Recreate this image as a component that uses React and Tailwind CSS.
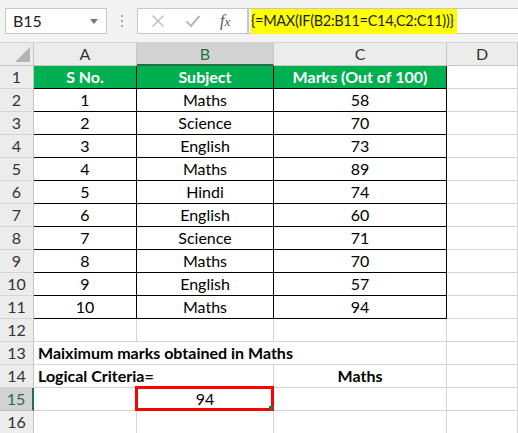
import React from 'react';

const font = { fontFamily: 'Lato, "Open Sans", sans-serif' };

const rows = [
  ['1', 'Maths', '58'],
  ['2', 'Science', '70'],
  ['3', 'English', '73'],
  ['4', 'Maths', '89'],
  ['5', 'Hindi', '74'],
  ['6', 'English', '60'],
  ['7', 'Science', '71'],
  ['8', 'Maths', '70'],
  ['9', 'English', '57'],
  ['10', 'Maths', '94'],
];

const RowHead = ({ n, active }) => (
  <div
    className={`h-[23px] flex items-center justify-center border-b border-r text-[16px] ${
      active
        ? 'bg-[#d2d2d2] border-b-[#bdbdbd] border-r-[#217346] border-r-2 text-[#217346]'
        : 'bg-[#ececec] border-b-[#d4d4d4] border-r-[#c6c6c6] text-[#333]'
    }`}
  >
    {n}
  </div>
);

const Cell = ({ children, black, blackRight, className = '' }) => (
  <div
    className={`h-[23px] flex items-center justify-center border-b border-r text-[16px] text-black ${
      black ? 'border-b-black' : 'border-b-[#d4d4d4]'
    } ${blackRight ? 'border-r-black' : 'border-r-[#d4d4d4]'} ${className}`}
  >
    {children}
  </div>
);

export default function App() {
  return (
    <div className="w-[518px] h-[433px] overflow-hidden bg-white" style={font}>
      {/* Formula bar */}
      <div className="h-[43px] bg-[#f3f3f3] flex items-start pt-[8px] border-b border-[#d4d4d4]">
        <div className="ml-[5px] w-[102px] h-[26px] bg-white border border-[#c6c6c6] flex items-center justify-between pl-[7px] pr-[8px]">
          <span className="text-[16px] text-[#222]">B15</span>
          <span className="w-0 h-0 border-l-[4px] border-r-[4px] border-t-[5px] border-l-transparent border-r-transparent border-t-[#777]" />
        </div>
        <div className="w-[30px] h-[26px] flex flex-col items-center justify-center gap-[3px]">
          <span className="w-[2px] h-[2px] bg-[#aaa]" />
          <span className="w-[2px] h-[2px] bg-[#aaa]" />
          <span className="w-[2px] h-[2px] bg-[#aaa]" />
        </div>
        <div className="w-[111px] h-[26px] bg-white border border-[#c6c6c6] flex items-center">
          <svg width="14" height="14" viewBox="0 0 14 14" className="ml-[13px]">
            <path d="M1.5 1.5 L12.5 12.5 M12.5 1.5 L1.5 12.5" stroke="#b8b8b8" strokeWidth="1.3" />
          </svg>
          <svg width="16" height="14" viewBox="0 0 16 14" className="ml-[20px]">
            <path d="M1.5 7.5 L6 12 L14.5 2" stroke="#b8b8b8" strokeWidth="2" fill="none" />
          </svg>
          <span className="ml-[19px] text-[16px] italic text-[#555]" style={{ fontFamily: '"Liberation Serif", serif' }}>
            f<span className="text-[13px]">x</span>
          </span>
        </div>
        <div className="flex-1 h-[26px] bg-white border-y border-l border-[#c6c6c6] flex items-center pl-[2px]">
          <span className="h-[25px] bg-[#ffff00] flex items-center pr-[3px] text-[14.5px] tracking-[-0.3px] text-[#222] whitespace-nowrap">
            {'{=MAX(IF(B2:B11=C14,C2:C11))}'}
          </span>
        </div>
      </div>

      {/* Grid */}
      <div className="grid grid-cols-[34px_103px_137px_173px_71px]">
        {/* Column headers */}
        <div className="h-[23px] bg-[#ececec] border-r border-b border-[#c6c6c6] relative">
          <svg width="15" height="15" className="absolute right-[3px] bottom-[3px]">
            <polygon points="15,0 15,15 0,15" fill="#b4b4b4" />
          </svg>
        </div>
        <div className="h-[23px] bg-[#ececec] border-r border-b border-[#c6c6c6] flex items-center justify-center text-[16px] text-[#333]">A</div>
        <div className="h-[23px] bg-[#d2d2d2] border-r border-[#c6c6c6] border-b-2 border-b-[#217346] flex items-center justify-center text-[16px] text-[#217346]">B</div>
        <div className="h-[23px] bg-[#ececec] border-r border-b border-[#c6c6c6] flex items-center justify-center text-[16px] text-[#333]">C</div>
        <div className="h-[23px] bg-[#ececec] border-r border-b border-[#c6c6c6] flex items-center justify-center text-[16px] text-[#333]">D</div>

        {/* Row 1 */}
        <RowHead n={1} />
        <Cell black blackRight className="bg-[#00b050] text-white font-bold">S No.</Cell>
        <Cell black blackRight className="bg-[#00b050] text-white font-bold">Subject</Cell>
        <Cell black blackRight className="bg-[#00b050] text-white font-bold">Marks (Out of 100)</Cell>
        <Cell />

        {rows.map((r, i) => (
          <React.Fragment key={i}>
            <RowHead n={i + 2} />
            <Cell black blackRight>{r[0]}</Cell>
            <Cell black blackRight>{r[1]}</Cell>
            <Cell black blackRight>{r[2]}</Cell>
            <Cell />
          </React.Fragment>
        ))}

        {/* Row 12 */}
        <RowHead n={12} />
        <Cell />
        <Cell />
        <Cell />
        <Cell />

        {/* Row 13 */}
        <RowHead n={13} />
        <Cell className="col-span-3 !justify-start pl-[4px] font-bold whitespace-nowrap">
          Maiximum marks obtained in Maths
        </Cell>
        <Cell />

        {/* Row 14 */}
        <RowHead n={14} />
        <Cell className="col-span-2 !justify-start pl-[4px] font-bold whitespace-nowrap">Logical Criteria=</Cell>
        <Cell className="font-bold">Maths</Cell>
        <Cell />

        {/* Row 15 */}
        <RowHead n={15} active />
        <Cell />
        <Cell className="relative">
          <span className="absolute -left-[2px] -top-[2px] -right-[1px] -bottom-[1px] border-[3px] border-[#ff0000]" />
          <span className="w-[4px] h-[4px] bg-[#217346] absolute right-[0px] bottom-[0px]" />
          94
        </Cell>
        <Cell />
        <Cell />

        {/* Row 16 */}
        <RowHead n={16} />
        <Cell />
        <Cell />
        <Cell />
        <Cell />
      </div>
    </div>
  );
}
